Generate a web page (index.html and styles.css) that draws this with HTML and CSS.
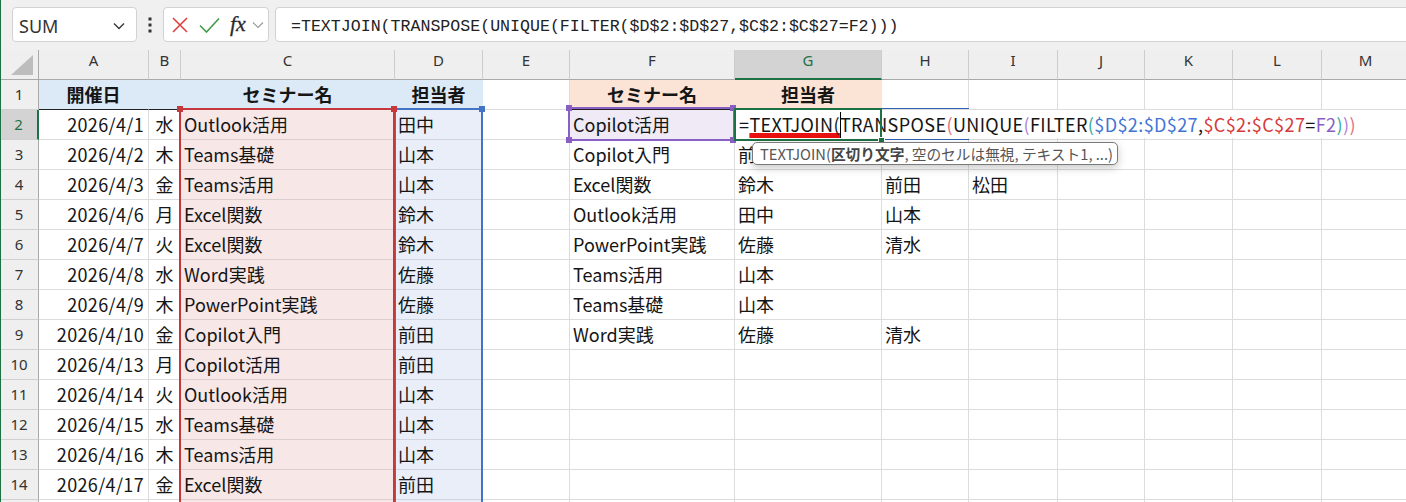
FILE: index.html
```html
<!DOCTYPE html>
<html lang="ja">
<head>
    <meta charset="UTF-8">
    <title>Excel - TEXTJOIN</title>
    <link rel="stylesheet" href="styles.css">
</head>
<body>
<div class="app">
    <div class="fbar">
        <div class="namebox">
            <span>SUM</span>
            <svg width="12" height="8" viewBox="0 0 12 8"><path d="M1 1.5 L6 6.5 L11 1.5" fill="none" stroke="#333" stroke-width="1.3"/></svg>
        </div>
        <div class="grip">
            <svg width="4" height="16" viewBox="0 0 4 16"><rect x="0.5" y="0.5" width="3" height="3" fill="#333"/><rect x="0.5" y="6.5" width="3" height="3" fill="#333"/><rect x="0.5" y="12.5" width="3" height="3" fill="#333"/></svg>
        </div>
        <div class="fxbox">
            <svg class="ic-x" width="16" height="16" viewBox="0 0 16 16"><path d="M1 1 L15 15 M15 1 L1 15" stroke="#e0403e" stroke-width="1.6" fill="none"/></svg>
            <svg class="ic-ok" width="21" height="16" viewBox="0 0 21 16"><path d="M1 8.5 L7.5 15 L20 1.5" stroke="#3f9b46" stroke-width="1.6" fill="none"/></svg>
            <span class="fx">fx</span>
            <svg class="ic-dd" width="12" height="8" viewBox="0 0 12 8"><path d="M1 1.5 L6 6.5 L11 1.5" fill="none" stroke="#9a9a9a" stroke-width="1.2"/></svg>
        </div>
        <div class="formula">=TEXTJOIN(TRANSPOSE(UNIQUE(FILTER($D$2:$D$27,$C$2:$C$27=F2)))</div>
    </div>

    <div class="sheet">
        <div class="row head">
            <div class="corner"><svg width="22" height="20" viewBox="0 0 22 20"><path d="M22 0 L22 20 L0 20 Z" fill="#bdbdbd"/></svg></div>
            <div>A</div><div>B</div><div>C</div><div>D</div><div>E</div><div>F</div>
            <div class="sel">G</div><div>H</div><div>I</div><div>J</div><div>K</div><div>L</div><div>M</div>
        </div>

        <div class="row">
            <div class="rh">1</div>
            <div class="th fb">開催日</div><div class="th fb"></div><div class="th fb">セミナー名</div><div class="th fb">担当者</div>
            <div></div>
            <div class="th fp">セミナー名</div><div class="th fp">担当者</div>
            <div></div><div></div><div></div><div></div><div></div><div></div>
        </div>

        <div class="row">
            <div class="rh sel">2</div>
            <div class="n">2026/4/1</div><div class="w">水</div><div class="pk">Outlook活用</div><div class="bl">田中</div>
            <div></div><div class="pu">Copilot活用</div><div></div>
            <div></div><div></div><div></div><div></div><div></div><div></div>
        </div>

        <div class="row">
            <div class="rh">3</div>
            <div class="n">2026/4/2</div><div class="w">木</div><div class="pk">Teams基礎</div><div class="bl">山本</div>
            <div></div><div>Copilot入門</div><div>前田</div>
            <div></div><div></div><div></div><div></div><div></div><div></div>
        </div>

        <div class="row">
            <div class="rh">4</div>
            <div class="n">2026/4/3</div><div class="w">金</div><div class="pk">Teams活用</div><div class="bl">山本</div>
            <div></div><div>Excel関数</div><div>鈴木</div>
            <div>前田</div><div>松田</div><div></div><div></div><div></div><div></div>
        </div>

        <div class="row">
            <div class="rh">5</div>
            <div class="n">2026/4/6</div><div class="w">月</div><div class="pk">Excel関数</div><div class="bl">鈴木</div>
            <div></div><div>Outlook活用</div><div>田中</div>
            <div>山本</div><div></div><div></div><div></div><div></div><div></div>
        </div>

        <div class="row">
            <div class="rh">6</div>
            <div class="n">2026/4/7</div><div class="w">火</div><div class="pk">Excel関数</div><div class="bl">鈴木</div>
            <div></div><div>PowerPoint実践</div><div>佐藤</div>
            <div>清水</div><div></div><div></div><div></div><div></div><div></div>
        </div>

        <div class="row">
            <div class="rh">7</div>
            <div class="n">2026/4/8</div><div class="w">水</div><div class="pk">Word実践</div><div class="bl">佐藤</div>
            <div></div><div>Teams活用</div><div>山本</div>
            <div></div><div></div><div></div><div></div><div></div><div></div>
        </div>

        <div class="row">
            <div class="rh">8</div>
            <div class="n">2026/4/9</div><div class="w">木</div><div class="pk">PowerPoint実践</div><div class="bl">佐藤</div>
            <div></div><div>Teams基礎</div><div>山本</div>
            <div></div><div></div><div></div><div></div><div></div><div></div>
        </div>

        <div class="row">
            <div class="rh">9</div>
            <div class="n">2026/4/10</div><div class="w">金</div><div class="pk">Copilot入門</div><div class="bl">前田</div>
            <div></div><div>Word実践</div><div>佐藤</div>
            <div>清水</div><div></div><div></div><div></div><div></div><div></div>
        </div>

        <div class="row">
            <div class="rh">10</div>
            <div class="n">2026/4/13</div><div class="w">月</div><div class="pk">Copilot活用</div><div class="bl">前田</div>
            <div></div><div></div><div></div>
            <div></div><div></div><div></div><div></div><div></div><div></div>
        </div>

        <div class="row">
            <div class="rh">11</div>
            <div class="n">2026/4/14</div><div class="w">火</div><div class="pk">Outlook活用</div><div class="bl">山本</div>
            <div></div><div></div><div></div>
            <div></div><div></div><div></div><div></div><div></div><div></div>
        </div>

        <div class="row">
            <div class="rh">12</div>
            <div class="n">2026/4/15</div><div class="w">水</div><div class="pk">Teams基礎</div><div class="bl">山本</div>
            <div></div><div></div><div></div>
            <div></div><div></div><div></div><div></div><div></div><div></div>
        </div>

        <div class="row">
            <div class="rh">13</div>
            <div class="n">2026/4/16</div><div class="w">木</div><div class="pk">Teams活用</div><div class="bl">山本</div>
            <div></div><div></div><div></div>
            <div></div><div></div><div></div><div></div><div></div><div></div>
        </div>

        <div class="row">
            <div class="rh">14</div>
            <div class="n">2026/4/17</div><div class="w">金</div><div class="pk">Excel関数</div><div class="bl">前田</div>
            <div></div><div></div><div></div>
            <div></div><div></div><div></div><div></div><div></div><div></div>
        </div>

        <div class="row">
            <div class="rh"></div>
            <div class="n"></div><div class="w"></div><div class="pk"></div><div class="bl"></div>
            <div></div><div></div><div></div>
            <div></div><div></div><div></div><div></div><div></div><div></div>
        </div>

        <!-- formula reference highlights -->
        <div class="rng rng-d"></div>
        <div class="rng rng-c"></div>
        <div class="rng rng-f"></div>
        <span class="knob k-red" style="left:177px;top:56px"></span>
        <span class="knob k-red" style="left:391px;top:56px"></span>
        <span class="knob k-blue" style="left:479px;top:56px"></span>
        <span class="knob k-pur" style="left:566px;top:55px"></span>
        <span class="knob k-pur" style="left:730px;top:55px"></span>
        <span class="knob k-pur" style="left:566px;top:87px"></span>
        <span class="knob k-pur" style="left:730px;top:87px"></span>

        <!-- in-cell editor -->
        <div class="editor"><span class="fn">=<u>TEXTJOIN(</u></span><i class="caret"></i>TRANSPOSE<span class="p1">(</span>UNIQUE<span class="p2">(</span>FILTER<span class="p3">(</span><span class="r-d">$D$2:$D$27</span>,<span class="r-c">$C$2:$C$27</span>=<span class="r-f">F2</span><span class="p3">)</span><span class="p2">)</span><span class="p1">)</span></div>
        <div class="editframe"></div>
        <div class="active"><span class="fill"></span></div>

        <div class="tip">TEXTJOIN(<b>区切り文字</b>, 空のセルは無視, テキスト1, ...)</div>
    </div>
</div>
</body>
</html>
```

FILE: styles.css
```css
* {
    box-sizing: border-box;
}
body {
    margin: 0;
    background-color: #f0f0f0;
    overflow: hidden;
    font-family: "Noto Sans", sans-serif;
}
.app {
    position: relative;
    width: 1406px;
    height: 502px;
    overflow: hidden;
}
.app::before {
    content: "";
    position: absolute;
    left: 0;
    top: 0;
    bottom: 0;
    width: 1px;
    background-color: #1e7145;
    z-index: 10;
}

/* formula bar */
.fbar {
    height: 50px;
    display: flex;
    align-items: flex-start;
    padding: 7px 0 0 12px;
}
.namebox {
    width: 125px;
    height: 35px;
    background-color: #fff;
    border: 1px solid #d2d2d2;
    border-radius: 4px;
    display: flex;
    align-items: center;
    justify-content: space-between;
    padding: 2px 11px 0 6px;
    font-size: 18px;
    color: #333;
}
.grip {
    width: 26px;
    height: 35px;
    display: flex;
    align-items: center;
    justify-content: center;
    padding-top: 1px;
}
.fxbox {
    width: 106px;
    height: 35px;
    background-color: #fff;
    border: 1px solid #d2d2d2;
    border-radius: 4px;
    display: flex;
    align-items: center;
}
.ic-x {
    margin-left: 8px;
}
.ic-ok {
    margin-left: 11px;
}
.fx {
    margin-left: 10px;
    font-family: "Liberation Serif", serif;
    font-style: italic;
    font-size: 22px;
    color: #2a2a2a;
    line-height: 1;
    margin-top: -2px;
    -webkit-text-stroke: 0.3px #2a2a2a;
}
.ic-dd {
    margin-left: 6px;
}
.formula {
    flex: 1;
    margin: 0 -10px 0 6px;
    height: 35px;
    background-color: #fff;
    border: 1px solid #d2d2d2;
    border-radius: 4px;
    padding: 5px 0 0 15px;
    line-height: 28px;
    font-family: "Liberation Mono", monospace;
    font-size: 16.6px;
    color: #222;
    white-space: nowrap;
}

/* grid */
.sheet {
    position: relative;
    background-color: #fff;
}
.row {
    display: grid;
    grid-template-columns: 39px 110px 32px 214px 88px 87px 165px 147px 87px 89px 87px 88px 89px 88px;
    height: 30px;
}
.row > div {
    border-right: 1px solid #dcdcdc;
    border-bottom: 1px solid #dcdcdc;
    padding: 0 3px;
    line-height: 29px;
    white-space: nowrap;
    overflow: hidden;
    font-family: "Noto Sans CJK JP", sans-serif;
    font-size: 18px;
    color: #151515;
}
.head > div {
    background-color: #efefef;
    border-right-color: #cdcdcd;
    border-bottom-color: #a9a9a9;
    font-family: "Noto Sans", sans-serif;
    font-size: 15px;
    line-height: 18px;
    padding-top: 1px;
    text-align: center;
    color: #333;
}
.head > .corner {
    border-right-color: #a9a9a9;
    padding: 5px 0 0 11px;
    text-align: left;
}
.head > .sel {
    background-color: #d3d3d3;
    color: #1e7145;
    border-bottom: 2px solid #1e7145;
}
.row > .rh {
    background-color: #efefef;
    border-right-color: #a9a9a9;
    border-bottom-color: #d0d0d0;
    font-family: "Noto Sans", sans-serif;
    font-size: 15px;
    text-align: center;
    color: #333;
    padding: 0;
}
.row > .rh.sel {
    background-color: #d3d3d3;
    color: #1e7145;
    border-right: 2px solid #1e7145;
}
.row > .th {
    font-weight: bold;
    text-align: center;
    border-bottom-color: #222;
}
.row > .fb {
    background-color: #dce9f6;
    border-right-color: #dce9f6;
}
.row > .fp {
    background-color: #fbe3d6;
    border-right-color: #fbe3d6;
}
.row > .n {
    text-align: right;
    padding-right: 4px;
    letter-spacing: 0.35px;
}
.row > .w {
    text-align: center;
    padding: 0;
}
.row > .pk {
    background-color: #f8e7e7;
    border-bottom-color: #dccfcf;
}
.row > .bl {
    background-color: #e9eef8;
    border-bottom-color: #cfd5df;
}
.row > .pu {
    background-color: #efeaf6;
}

/* reference highlights */
.rng {
    position: absolute;
    border: 2px solid;
    border-bottom: none;
}
.rng-c {
    left: 179px;
    top: 58px;
    width: 216px;
    height: 460px;
    border-color: #c4393b;
}
.rng-d {
    left: 394px;
    top: 58px;
    width: 89px;
    height: 460px;
    border-color: #4472c4;
}
.rng-f {
    left: 568px;
    top: 57px;
    width: 167px;
    height: 34px;
    border: 2px solid #8a5fc4;
}
.knob {
    position: absolute;
    width: 6px;
    height: 6px;
}
.k-red {
    background-color: #c4393b;
}
.k-blue {
    background-color: #4472c4;
}
.k-pur {
    background-color: #8a5fc4;
}

/* cell editor */
.editor {
    position: absolute;
    left: 736px;
    top: 60px;
    width: 680px;
    height: 28px;
    background-color: #fff;
    padding-left: 3px;
    font-family: "Noto Sans CJK JP", sans-serif;
    font-size: 18px;
    line-height: 28px;
    letter-spacing: 0.4px;
    color: #151515;
    white-space: nowrap;
}
.editor u {
    text-decoration: underline 5px #e8100e;
    text-underline-offset: 1px;
    text-decoration-skip-ink: none;
}
.caret {
    display: inline-block;
    width: 1px;
    height: 26px;
    margin-right: -1px;
    vertical-align: -6px;
    background-color: #000;
}
.p1 { color: #e0707e; }
.p2 { color: #ad82d8; }
.p3 { color: #35a99a; }
.r-d { color: #3f74d4; }
.r-c { color: #d63a3c; }
.r-f { color: #8a5fc4; }
.editframe {
    position: absolute;
    left: 882px;
    top: 58px;
    width: 87px;
    height: 32px;
    border-top: 1px solid #2f62b4;
    border-bottom: 1px solid #2f62b4;
}
.active {
    position: absolute;
    left: 734px;
    top: 58px;
    width: 148px;
    height: 33px;
    border: 2px solid #1e7145;
}
.fill {
    position: absolute;
    right: -5px;
    bottom: -5px;
    width: 7px;
    height: 7px;
    background-color: #1e7145;
    border: 1px solid #fff;
}

/* function tooltip */
.tip {
    position: absolute;
    left: 752px;
    top: 92px;
    width: 366px;
    height: 23px;
    background-color: #fff;
    border: 1px solid #7a7a7a;
    border-radius: 5px;
    box-shadow: 0 3px 8px rgba(0, 0, 0, 0.22);
    padding: 0 0 0 7px;
    font-family: "Noto Sans CJK JP", sans-serif;
    font-size: 14.7px;
    line-height: 21px;
    color: #555;
    white-space: nowrap;
}
.tip b {
    color: #444;
}
```
